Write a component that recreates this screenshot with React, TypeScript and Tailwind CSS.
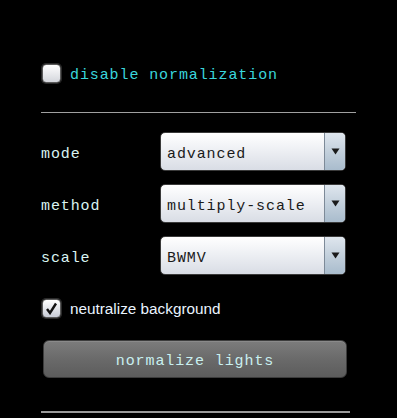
import React from "react";

const mono = { fontFamily: '"Liberation Mono", "Courier New", monospace' };

function Select({ value }: { value: string }) {
  return (
    <div className="w-[186px] h-[39px] rounded-[5px] border border-[#3a3a3a] flex overflow-hidden bg-[linear-gradient(to_bottom,#ffffff_0%,#eef0f4_45%,#d9dde5_100%)] shadow-[inset_0_1px_0_#ffffff]">
      <div className="flex-1 flex items-center pl-[6px] pt-[5px] text-[15px] leading-none tracking-[0.9px] text-[#1a1a1a]" style={mono}>
        {value}
      </div>
      <div className="w-[21px] border-l border-[#7d8a98] flex items-center justify-center bg-[linear-gradient(to_bottom,#dfe6ee_0%,#c3d0dc_50%,#a9bccd_100%)]">
        <svg width="9" height="7" viewBox="0 0 9 7">
          <path d="M0.5 0.5 L8.5 0.5 L4.5 6.5 Z" fill="#1a1a1a" />
        </svg>
      </div>
    </div>
  );
}

function Row({ label, value }: { label: string; value: string }) {
  return (
    <div className="flex items-center h-[39px]">
      <div className="w-[119px] pt-[5px] text-[15px] leading-none tracking-[0.9px] text-[#d9f4f2]" style={mono}>
        {label}
      </div>
      <Select value={value} />
    </div>
  );
}

export default function App() {
  return (
    <div className="w-[397px] h-[418px] bg-black overflow-hidden">
      <div className="pl-[42px] pt-[64px] h-[83px] flex items-center">
        <div className="w-[19px] h-[19px] rounded-[4px] border border-[#5a5a5a] bg-[linear-gradient(to_bottom,#ffffff,#d4d6dc)] shadow-[0_0_0_1px_#2a2a2a]" />
        <span className="ml-[9px] pt-[3px] text-[15px] leading-none tracking-[0.9px] text-[#3ad6dc]" style={mono}>
          disable normalization
        </span>
      </div>
      <div className="ml-[41px] mt-[29px] w-[315px] h-px bg-[#a0a0a0]" />
      <div className="pl-[41px] mt-[19px] flex flex-col gap-[13px]">
        <Row label="mode" value="advanced" />
        <Row label="method" value="multiply-scale" />
        <Row label="scale" value="BWMV" />
      </div>
      <div className="pl-[42px] mt-[24px] h-[19px] flex items-center">
        <div className="w-[19px] h-[19px] rounded-[4px] border border-[#5a5a5a] bg-[linear-gradient(to_bottom,#ffffff,#c8ccd6)] shadow-[0_0_0_1px_#2a2a2a] flex items-center justify-center">
          <svg width="13" height="13" viewBox="0 0 13 13">
            <path d="M2 7 L5 11 L11 1.5" stroke="#111" strokeWidth="2.4" fill="none" strokeLinejoin="miter" />
          </svg>
        </div>
        <span
          className="ml-[9px] text-[15.3px] leading-none text-[#eaf4ff]"
          style={{ fontFamily: '"Liberation Sans", Arial, sans-serif' }}
        >
          neutralize background
        </span>
      </div>
      <div className="ml-[43px] mt-[22px] w-[304px] h-[38px] rounded-[6px] border border-[#3c3c3c] bg-[linear-gradient(to_bottom,#7c7c7c_0%,#6a6a6a_50%,#5c5c5c_100%)] shadow-[inset_0_1px_0_#8a8a8a] flex items-center justify-center">
        <span className="pt-[5px] text-[15px] leading-none tracking-[0.9px] text-[#c9f0f0]" style={mono}>
          normalize lights
        </span>
      </div>
      <div className="ml-[41px] mt-[33px] w-[309px] h-[2px] bg-[#9a9a9a]" />
    </div>
  );
}
